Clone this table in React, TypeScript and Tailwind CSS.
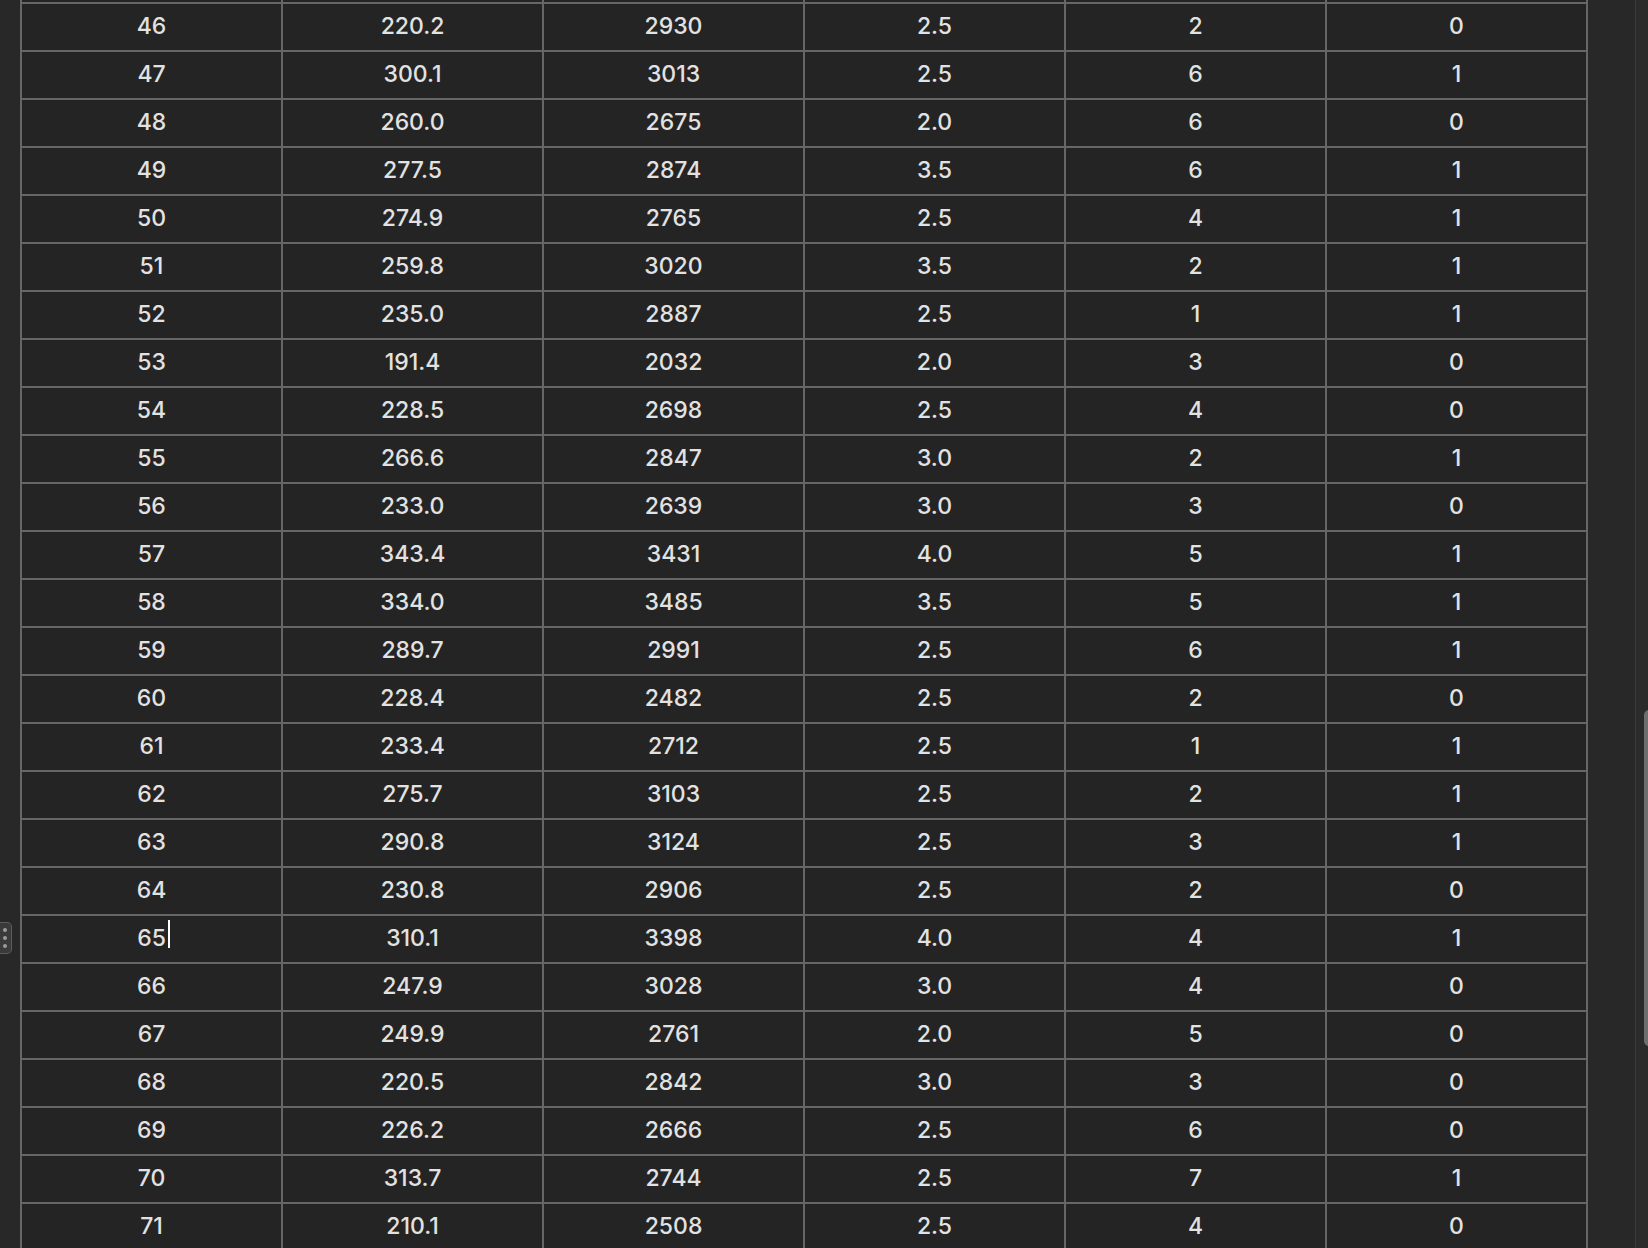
import React from 'react';

// rows 45..71 — row 45 is only partly visible above the fold
const ROWS: [number, string, string, string, string, string][] = [
  [45, '0', '0', '0', '0', '0'],
  [46, '220.2', '2930', '2.5', '2', '0'],
  [47, '300.1', '3013', '2.5', '6', '1'],
  [48, '260.0', '2675', '2.0', '6', '0'],
  [49, '277.5', '2874', '3.5', '6', '1'],
  [50, '274.9', '2765', '2.5', '4', '1'],
  [51, '259.8', '3020', '3.5', '2', '1'],
  [52, '235.0', '2887', '2.5', '1', '1'],
  [53, '191.4', '2032', '2.0', '3', '0'],
  [54, '228.5', '2698', '2.5', '4', '0'],
  [55, '266.6', '2847', '3.0', '2', '1'],
  [56, '233.0', '2639', '3.0', '3', '0'],
  [57, '343.4', '3431', '4.0', '5', '1'],
  [58, '334.0', '3485', '3.5', '5', '1'],
  [59, '289.7', '2991', '2.5', '6', '1'],
  [60, '228.4', '2482', '2.5', '2', '0'],
  [61, '233.4', '2712', '2.5', '1', '1'],
  [62, '275.7', '3103', '2.5', '2', '1'],
  [63, '290.8', '3124', '2.5', '3', '1'],
  [64, '230.8', '2906', '2.5', '2', '0'],
  [65, '310.1', '3398', '4.0', '4', '1'],
  [66, '247.9', '3028', '3.0', '4', '0'],
  [67, '249.9', '2761', '2.0', '5', '0'],
  [68, '220.5', '2842', '3.0', '3', '0'],
  [69, '226.2', '2666', '2.5', '6', '0'],
  [70, '313.7', '2744', '2.5', '7', '1'],
  [71, '210.1', '2508', '2.5', '4', '0'],
];

const Cell: React.FC<{ children: React.ReactNode; caret?: boolean; hidden?: boolean }> = ({ children, caret, hidden }) => (
  <div className="h-[48px] pb-[2px] flex items-center justify-center border-r-2 border-b-2 border-[#666666] bg-[#242424]">
    {!hidden && (
      <span className="relative">
        {children}
        {caret && <span className="absolute top-[-1px] right-[-4px] w-[2px] h-[28px] bg-white" />}
      </span>
    )}
  </div>
);

export default function App() {
  return (
    <div
      className="relative w-[1648px] h-[1248px] overflow-hidden bg-[#282828] text-[#e2e2e2] text-[23px] font-medium"
      style={{ fontFamily: 'Inter, "Noto Sans", sans-serif' }}
    >
      <div className="flex h-full">
        <div className="flex-1 pl-[20px] pr-[47px]">
          <div className="-mt-[44px] grid grid-cols-6 border-l-2 border-[#666666]">
            {ROWS.map((r) => {
              const hidden = r[0] === 45;
              return (
                <React.Fragment key={r[0]}>
                  <Cell hidden={hidden} caret={r[0] === 65}>{r[0]}</Cell>
                  <Cell hidden={hidden}>{r[1]}</Cell>
                  <Cell hidden={hidden}>{r[2]}</Cell>
                  <Cell hidden={hidden}>{r[3]}</Cell>
                  <Cell hidden={hidden}>{r[4]}</Cell>
                  <Cell hidden={hidden}>{r[5]}</Cell>
                </React.Fragment>
              );
            })}
          </div>
        </div>

        {/* vertical scrollbar */}
        <div className="w-[13px] h-full border-l border-[#3a3a3a] bg-[#2b2b2b] pt-[710px] pl-[8px]">
          <div className="w-[5px] h-[336px] rounded-l-full bg-[#6e6e6e]" />
        </div>
      </div>

      {/* row drag handle */}
      <div className="absolute left-0 top-[922px] w-[12px] h-[32px] rounded-r-[5px] border border-l-0 border-[#5c5c5c] bg-[#3a3a3a] flex flex-col items-center justify-center gap-[4px] pr-[1px]">
        <span className="w-[4px] h-[4px] rounded-full bg-[#9a9a9a]" />
        <span className="w-[4px] h-[4px] rounded-full bg-[#9a9a9a]" />
        <span className="w-[4px] h-[4px] rounded-full bg-[#9a9a9a]" />
      </div>
    </div>
  );
}
